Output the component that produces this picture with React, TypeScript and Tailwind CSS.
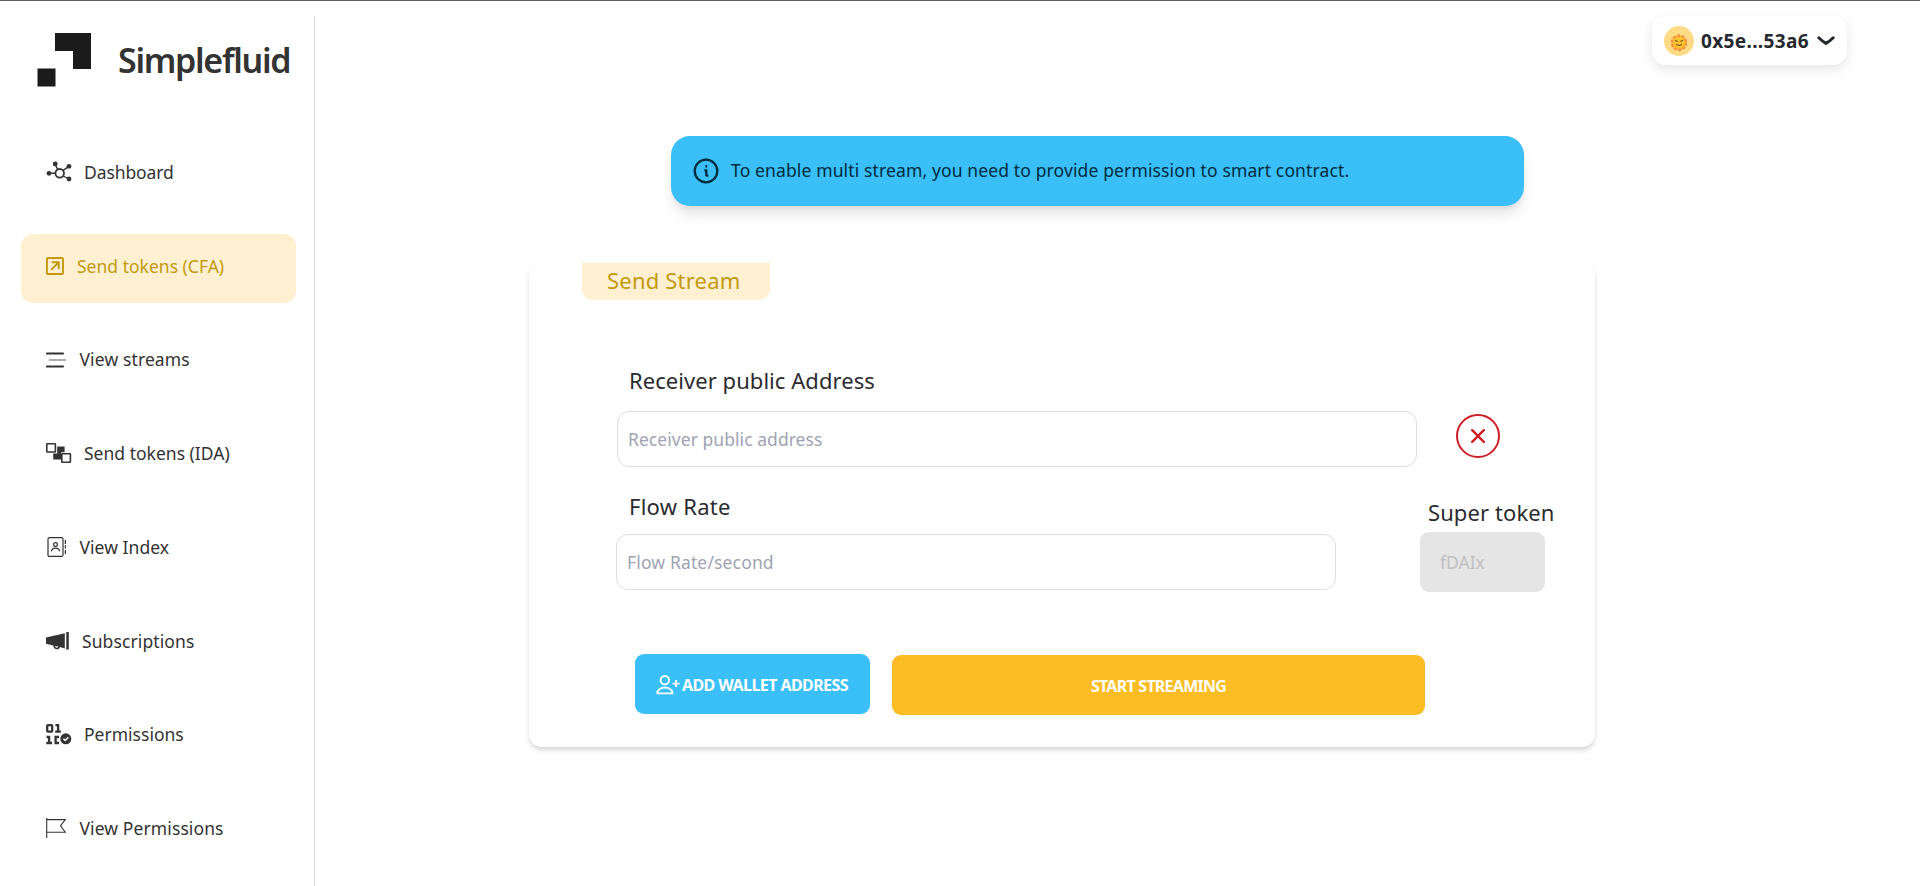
import React from "react";

type NavItem = { label: string; icon: React.ReactNode; gap: string; track: string; active?: boolean };

const DashboardIcon = () => (
  <svg width="26" height="22" viewBox="0 0 26 22" fill="currentColor" stroke="currentColor">
    <circle cx="13.7" cy="12.3" r="4.3" fill="none" strokeWidth="1.8" />
    <g stroke="none">
      <circle cx="3" cy="12.3" r="2.4" />
      <circle cx="9.2" cy="3" r="2.4" />
      <circle cx="23" cy="5.3" r="2.4" />
      <circle cx="23" cy="18" r="2.4" />
    </g>
    <path d="M3 12.3h6.4M9.2 3l2.4 5.5M23 5.3l-5.9 4M23 18l-5.9-3" fill="none" strokeWidth="1.4" />
  </svg>
);

const SendIcon = () => (
  <svg width="18" height="18" viewBox="0 0 18 18" fill="none" stroke="currentColor" strokeWidth="1.9">
    <rect x="0.95" y="0.95" width="16.1" height="16.1" rx="1" />
    <path d="M5.7 5.3h7v7M12.5 5.5l-7.3 7.3" />
  </svg>
);

const StreamsIcon = () => (
  <svg width="20" height="16" viewBox="0 0 20 16" fill="none" stroke="currentColor" strokeWidth="2.1" strokeLinecap="round">
    <path d="M1 1.5h16M1 14.5h16" />
    <path d="M3.7 8h15.3" opacity="0.4" />
  </svg>
);

const BlocksIcon = () => (
  <svg width="26" height="20" viewBox="0 0 26 20" fill="none" stroke="currentColor" strokeWidth="1.6">
    <path d="M11.2 3.6h7.4v5.6h-3.4v7.2H7.2v-5.9h4z" fill="currentColor" stroke="none" />
    <rect x="0.8" y="0.8" width="8.6" height="8.2" rx="0.5" fill="#fff" />
    <rect x="15.8" y="10.8" width="8.6" height="8.4" rx="0.5" fill="#fff" />
  </svg>
);

const IndexIcon = () => (
  <svg width="20" height="20" viewBox="0 0 20 20" fill="none" stroke="currentColor" strokeWidth="1.2">
    <rect x="2" y="0.6" width="15" height="18.8" rx="1.5" />
    <circle cx="9.5" cy="7.5" r="1.9" />
    <path d="M5.4 14.4c.3-4.4 7.9-4.4 8.2 0M19.4 3v4M19.4 8.2v3.4M19.4 13v4" />
  </svg>
);

const MegaphoneIcon = () => (
  <svg width="23" height="18" viewBox="0 0 23 18" fill="currentColor">
    <path d="M0 5.5L18.8 1.2v15.2L13.9 15c-.6 3.4-6.5 3.2-6.6-1.4L0 11.8zM9 14c.4 2.2 3 2.2 3.3.6z" fillRule="evenodd" />
    <path d="M20.3 0h2.5v17.5h-2.5z" />
  </svg>
);

const PermissionsIcon = () => (
  <svg width="26" height="21" viewBox="0 0 26 21" fill="none" stroke="currentColor" strokeWidth="2.3">
    <rect x="1.2" y="1.2" width="5" height="6.4" rx="0.8" />
    <path d="M9.4 1.2h2.7v7M9.2 7.7h5.6M0.6 13h2.5v6M0.3 19h5.8M13 13H9.6v6H13" />
    <circle cx="19.8" cy="14.8" r="6.2" fill="#fff" stroke="none" />
    <circle cx="19.8" cy="14.8" r="5.5" fill="currentColor" stroke="none" />
    <path d="M17.4 14.7l1.8 1.8 3.2-3.2" stroke="#fff" strokeWidth="1.4" />
  </svg>
);

const FlagIcon = () => (
  <svg width="20" height="20" viewBox="0 0 20 20" fill="none" stroke="currentColor" strokeWidth="1.1">
    <path d="M0.7 0v20M0.7 1.6h18.6l-4.8 6.2 4.8 6.4H0.7" />
  </svg>
);

const navItems: NavItem[] = [
  { label: "Dashboard", icon: <DashboardIcon />, gap: "gap-3", track: "tracking-[-0.1px]" },
  { label: "Send tokens (CFA)", icon: <SendIcon />, gap: "gap-[13px]", track: "tracking-[0.01px]", active: true },
  { label: "View streams", icon: <StreamsIcon />, gap: "gap-[13.5px]", track: "tracking-[0.12px]" },
  { label: "Send tokens (IDA)", icon: <BlocksIcon />, gap: "gap-3", track: "tracking-[0.01px]" },
  { label: "View Index", icon: <IndexIcon />, gap: "gap-[13.5px]", track: "tracking-[0.05px]" },
  { label: "Subscriptions", icon: <MegaphoneIcon />, gap: "gap-[13px]", track: "tracking-[0.1px]" },
  { label: "Permissions", icon: <PermissionsIcon />, gap: "gap-3", track: "tracking-[0.01px]" },
  { label: "View Permissions", icon: <FlagIcon />, gap: "gap-[13.5px]", track: "tracking-[0.1px]" },
];

function Sidebar() {
  return (
    <aside className="mt-[15px] w-[315px] shrink-0 border-r border-[#dcdcdf] pl-[21px] pr-[18px]">
      <div className="flex h-[71px] items-start pl-4 pt-[17px]">
        <svg width="55" height="54" viewBox="0 0 55 54" fill="#1b1b1b" className="shrink-0">
          <path d="M18 0h36v36H36V18H18zM0.5 35.5h18v18h-18z" />
        </svg>
        <span className="ml-[26px] mt-px whitespace-nowrap text-[34px] font-semibold leading-[52px] tracking-[-1.3px] text-[#333]">
          Simplefluid
        </span>
      </div>
      <nav className="mt-[53px] flex flex-col gap-[24.75px]">
        {navItems.map((item) => (
          <a
            key={item.label}
            className={`flex h-[69px] shrink-0 items-center whitespace-nowrap rounded-xl pb-[5px] pl-[25px] text-[17.5px] ${item.gap} ${item.track} ${
              item.active ? "bg-[#fef0d0] text-[#c4990f]" : "text-[#333]"
            }`}
          >
            {item.icon}
            <span>{item.label}</span>
          </a>
        ))}
      </nav>
    </aside>
  );
}

function Avatar() {
  return (
    <svg width="30" height="30" viewBox="0 0 30 30">
      <circle cx="15" cy="15" r="15" fill="#ffdb85" />
      <circle cx="15" cy="16.7" r="7.3" fill="#fbb52d" stroke="#f58a3c" strokeWidth="2" strokeDasharray="3 1.6" />
      <circle cx="15" cy="16.7" r="5.8" fill="#fcc22f" />
      <path d="M11 14.3l2.6 1M19 14.3l-2.6 1M12 18.2q3 2.4 6 0" stroke="#8a6420" strokeWidth="1.3" fill="none" />
    </svg>
  );
}

type FieldProps = { label: string; placeholder: string; className: string; labelClass: string; inputClass: string };

function Field({ label, placeholder, className, labelClass, inputClass }: FieldProps) {
  return (
    <label className={`flex flex-col ${className}`}>
      <span className={`text-[22px] leading-8 text-[#2b2b2f] ${labelClass}`}>{label}</span>
      <input
        className={`h-14 w-full rounded-xl border border-[#e0dcde] px-2.5 text-[17.5px] outline-none placeholder:text-[#9fa3b3] ${inputClass}`}
        placeholder={placeholder}
      />
    </label>
  );
}

export default function App() {
  return (
    <div className="flex h-[886px] flex-col overflow-hidden border-t border-[#5f5f61] bg-white font-['Noto_Sans',sans-serif]">
      <div className="flex min-h-0 flex-1">
        <Sidebar />
        <main className="flex min-w-0 flex-1 flex-col">
          <button className="mr-[73px] mt-[15px] flex h-[49px] w-[195px] items-center self-end rounded-[14px] bg-white pl-3 text-[#25292e] shadow-[0_4px_12px_rgba(0,0,0,0.1)]">
            <Avatar />
            <span className="ml-[7px] pt-0.5 text-[19px] font-bold tracking-[0.35px]">0x5e...53a6</span>
            <svg width="18" height="10" viewBox="0 0 18 10" fill="none" stroke="currentColor" strokeWidth="3" strokeLinecap="round" strokeLinejoin="round" className="ml-2">
              <path d="M1.8 1.8Q5 5 9 7.4q4-2.4 7.2-5.6" />
            </svg>
          </button>

          <div className="ml-[356px] mt-[71px] flex h-[70px] w-[853px] shrink-0 items-center rounded-[19px] bg-[#3abff8] pl-[22px] text-[#002b3d] shadow-[0_10px_15px_-3px_rgba(0,0,0,0.12),0_4px_6px_-2px_rgba(0,0,0,0.06)]">
            <svg width="26" height="26" viewBox="0 0 26 26" fill="none" stroke="currentColor" strokeWidth="2.3">
              <circle cx="13" cy="13" r="11.3" />
              <path d="M11.3 12.3h2v5.5M12.8 17.6h2.6" />
              <path d="M12.4 8.3h1.8" strokeWidth="2.5" />
            </svg>
            <span className="ml-3 pb-0.5 text-[17.5px] tracking-[0.13px]">
              To enable multi stream, you need to provide permission to smart contract.
            </span>
          </div>

          <section className="ml-[214px] mt-[57px] flex h-[484px] w-[1066px] shrink-0 flex-col rounded-[13px] shadow-[0_4px_6px_-1px_rgba(0,0,0,0.14),0_2px_4px_-1px_rgba(0,0,0,0.08)]">
            <h2 className="ml-[53px] flex h-[37px] w-[188px] items-center rounded-b-[11px] bg-[#fef0d0] pb-1 pl-[25px] text-[22px] leading-8 tracking-[0.2px] text-[#c4990f]">
              Send Stream
            </h2>

            <div className="ml-[88px] mt-16 flex items-end">
              <Field
                label="Receiver public Address"
                placeholder="Receiver public address"
                className="w-[800px]"
                labelClass="mb-[15px] pl-3 tracking-[0.05px]"
                inputClass="tracking-[0.05px]"
              />
              <button className="mb-[9px] ml-[39px] flex size-11 items-center justify-center rounded-full border-[2.5px] border-[#cf1f24] text-[#cf1f24]">
                <svg width="14" height="14" viewBox="0 0 14 14" stroke="currentColor" strokeWidth="2.4" strokeLinecap="round">
                  <path d="M1.2 1.2l11.6 11.6M12.8 1.2L1.2 12.8" />
                </svg>
              </button>
            </div>

            <div className="ml-[87px] mt-[23px] flex items-end">
              <Field
                label="Flow Rate"
                placeholder="Flow Rate/second"
                className="w-[720px]"
                labelClass="mb-3 pl-[13px] tracking-[0.25px]"
                inputClass="tracking-[0.15px]"
              />
              <div className="-mb-0.5 ml-[84px] flex flex-col">
                <span className="whitespace-nowrap pl-2 text-[22px] leading-8 tracking-[0.1px] text-[#2b2b2f]">Super token</span>
                <div className="mt-1 flex h-[60px] w-[125px] items-center rounded-[9px] bg-[#e5e5e5] pl-5 text-[17.5px] text-[#c0c0c0]">fDAIx</div>
              </div>
            </div>

            <div className="ml-[106px] mt-16 flex items-start gap-[22px] text-[16px] font-bold text-white">
              <button className="flex h-[60px] w-[235px] items-center rounded-[9px] bg-[#3abff8] pl-[21px] pt-0.5 tracking-[-0.58px]">
                <svg width="24" height="20" viewBox="0 0 24 20" fill="none" stroke="currentColor" strokeWidth="1.9" className="shrink-0">
                  <circle cx="8.8" cy="5.2" r="4.2" />
                  <path d="M1.4 18.4c-.3-7.8 15.3-7.8 15 0z" strokeLinejoin="round" />
                  <path d="M16.6 8.6h7M20.1 5.1v7" />
                </svg>
                <span className="ml-0.5 whitespace-nowrap">ADD WALLET ADDRESS</span>
              </button>
              <button className="mt-px flex h-[60px] w-[533px] items-center justify-center rounded-[9px] bg-[#fbbd23] pt-0.5 tracking-[-0.75px]">
                START STREAMING
              </button>
            </div>
          </section>
        </main>
      </div>
    </div>
  );
}
